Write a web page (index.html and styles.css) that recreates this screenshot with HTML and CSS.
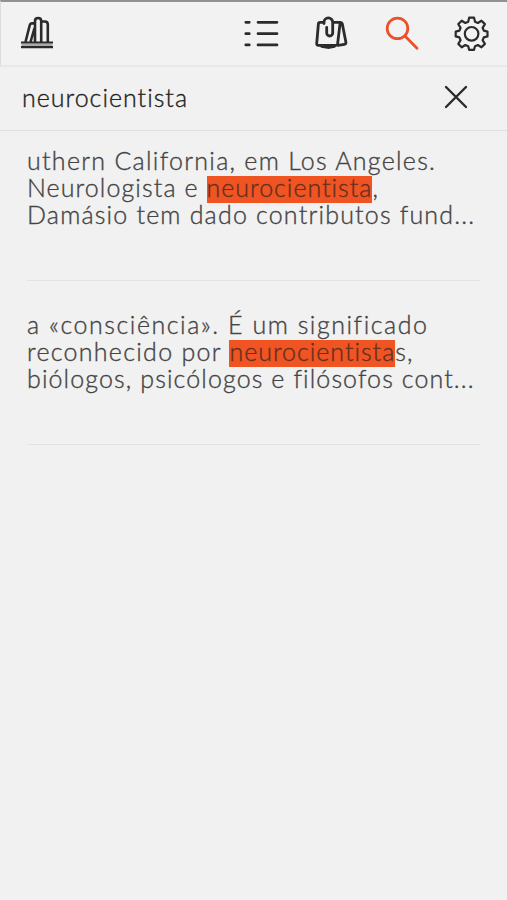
FILE: index.html
```html
<!DOCTYPE html>
<html lang="pt">
<head>
<meta charset="utf-8">
<title>Pesquisa</title>
<link rel="stylesheet" href="styles.css">
</head>
<body>
<header class="toolbar">
  <svg class="icon books" width="40" height="40" viewBox="0 0 40 40"><path d="M5.500 29.800h31" stroke="#aaa" stroke-width="2.400"/><path d="M5 27.500h32M5 32.200h32" stroke-width="2.200"/><path d="M9.500 27L13.800 10Q14.200 8.400 15.700 8.400H19M14.500 27L18.500 13M19 27V6q0-3 3.100-3t3.100 3V27M25.200 6.500h3.600q3 0 3 3v17.500" stroke-width="2.600"/></svg>
  <nav class="actions">
    <svg class="icon" width="40" height="40" viewBox="0 0 40 40"><path d="M3.800 8.300h3.500M3.800 19.700h3.500M3.800 30.900h3.500M16 8.300h19M16 19.700h19M16 30.900h19" stroke-width="2.700"/></svg>
    <svg class="icon" width="40" height="40" viewBox="0 0 40 40"><path d="M12 8.300H8Q6.500 8.300 6.400 9.800L4.700 29.500Q4.600 31.300 6.300 31.300H24Q25.400 31.300 25.600 29.900L28 10M20.700 8.300h7.800q1.500 0 1.800 1.500l3.600 18.500q.3 1.800-1.500 2l-6.400 1M9.500 32.300l7.500 1.200 5.500-1.200M12 9.500V8.300a4.350 4.350 0 0 1 8.700 0V19a3 3 0 0 1-6 0v-5.500"/></svg>
    <svg class="icon search" width="40" height="40" viewBox="0 0 40 40"><circle cx="15.500" cy="14.400" r="10.300"/><path d="M23 22L35 34.300"/></svg>
    <svg class="icon gear" width="40" height="40" viewBox="0 0 40 40"><circle cx="19.600" cy="19.800" r="6.800"/><path d="M17.200 4.600h4.800l1 4.200 2.800 1.200 3.700-2.300 3.400 3.400-2.300 3.700 1.200 2.800 3.700 1v4.800l-3.700 1-1.200 2.800 2.300 3.700-3.400 3.400-3.700-2.300-2.800 1.200-1 3.700h-4.800l-1-3.700-2.800-1.200-3.700 2.300-3.400-3.400 2.300-3.700-1.200-2.800-3.700-1v-4.800l3.700-1 1.200-2.800-2.300-3.700 3.400-3.400 3.700 2.300 2.800-1.200z" transform="translate(0 -1)"/></svg>
  </nav>
</header>
<section class="searchbar">
  <span class="query">neurocientista</span>
  <svg class="icon close" width="24" height="24" viewBox="0 0 24 24"><path d="M2 2l20 20M22 2L2 22"/></svg>
</section>
<main class="results">
  <article class="result">
    <p class="line wide">uthern California, em Los Angeles.</p>
    <p class="line"><span>Neurologista e </span><mark>neurocientista</mark>,</p>
    <p class="line mid">Damásio tem dado contributos fund...</p>
  </article>
  <article class="result">
    <p class="line widest">a «consciência». É um significado</p>
    <p class="line"><span class="wide">reconhecido por </span><mark>neurocientista</mark>s,</p>
    <p class="line last">biólogos, psicólogos e filósofos cont...</p>
  </article>
</main>
</body>
</html>
```
FILE: styles.css
```css
* { box-sizing: border-box; }
body { margin: 0; min-height: 900px; background: #f1f1f1; font-family: Lato, "Open Sans", sans-serif; font-weight: 300; font-size: 25px; color: #444; font-variant-ligatures: none; -webkit-text-stroke: 0.35px currentColor; }
.toolbar { height: 67px; display: flex; align-items: center; justify-content: space-between; padding: 0 15px 0 15px; background: #f2f2f2; border-top: 2px solid #919191; border-bottom: 2px solid #e8e8e8; border-left: 1px solid #ddd; }
.actions { display: flex; gap: 30px; }
.icon { display: block; fill: none; stroke: #2b2b2b; stroke-width: 2.8; stroke-linejoin: round; stroke-linecap: round; }
.books { margin-top: 2px; stroke-linecap: butt; }
.search { stroke: #e8532c; }
.gear { stroke-width: 2.2; }
.searchbar { height: 64px; display: flex; align-items: center; justify-content: space-between; padding: 0 39px 3px 22px; border-bottom: 1px solid #dedede; }
.query { color: #222; letter-spacing: 1px; }
.close { stroke-width: 2.4; }
.results { padding: 0 27px; }
.result { height: 164px; padding-top: 32px; border-bottom: 1px solid #e3e3e3; }
.result:first-child { height: 150px; padding-top: 18px; }
.line { margin: 0; height: 27px; line-height: 23px; letter-spacing: 1.1px; white-space: pre; }
.wide { letter-spacing: 1.28px; }
.mid { letter-spacing: 1.19px; }
.last { letter-spacing: 1.11px; }
.widest { letter-spacing: 1.54px; }
mark { display: inline-block; height: 27px; letter-spacing: 0.99px; color: #64301f; background: #f05423; }
```
